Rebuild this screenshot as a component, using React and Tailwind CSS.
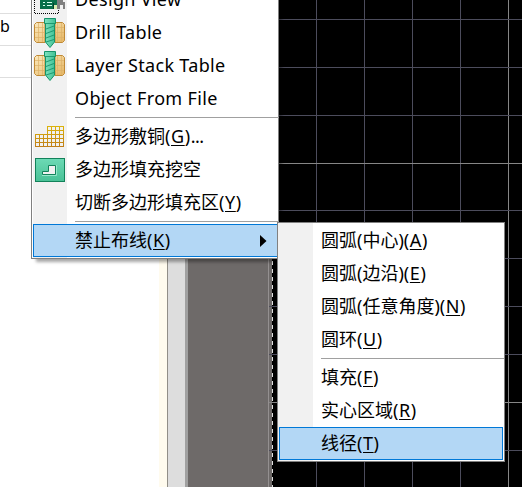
const FONT = "font-['Noto_Sans','Noto_Sans_CJK_SC',sans-serif]";

function DrillIcon() {
  return (
    <svg width="32" height="31" viewBox="0 0 32 31">
      <defs>
        <linearGradient id="board" x1="0" y1="0" x2="1" y2="1">
          <stop offset="0" stopColor="#fbe9bd" />
          <stop offset="1" stopColor="#e5b562" />
        </linearGradient>
        <linearGradient id="bit" x1="0" y1="0" x2="1" y2="0">
          <stop offset="0" stopColor="#80e3c0" />
          <stop offset="1" stopColor="#3fc094" />
        </linearGradient>
      </defs>
      <path d="M2.5 5.5H11V25.5H2.5L.5 23.5V7.5ZM21 5.5H28.5L30.5 7.5V23.5L28.5 25.5H21Z" fill="url(#board)" stroke="#c08a36" />
      <path d="M1 10.5H11M1 15.5H11M1 20.5H11M4.5 6V25M8.5 6V25M21 10.5H30M21 15.5H30M21 20.5H30M23.5 6V25M27.5 6V25" stroke="#dcb268" strokeWidth=".7" />
      <path d="M10.5 1.5H21.5V6.5H20.5V25L16 30.5L11.5 25V6.5H10.5Z" fill="url(#bit)" stroke="#16936a" />
      <path d="M11 6.5H21M12 12L20 9M12 16.5L20 13.5M12 21L20 18M12 25L20 22.5" stroke="#16936a" strokeWidth=".9" />
    </svg>
  );
}

function ViewIcon() {
  return (
    <svg width="32" height="31" viewBox="0 -16 32 31" shapeRendering="crispEdges">
      <path d="M.5 -16V13.5H24.5V-16" fill="none" stroke="#000" strokeDasharray="1 1" />
      <rect x="6" y="-8" width="17" height="17" fill="#08704a" />
      <path d="M9 2.5H11M13 2.5H18M9 5.5H11M13 5.5H18M9 -.5H18" stroke="#d8fff0" />
      <path d="M23 0h6v2h2v7h-2v-4h-3v4h-3z" fill="#808080" />
      <path d="M20 5h3v4h-3z" fill="#d9eeb0" />
      <path d="M19.5 3V9" stroke="#053f2a" />
    </svg>
  );
}

function PolygonIcon() {
  return (
    <svg width="32" height="31" viewBox="0 0 32 31">
      <defs>
        <linearGradient id="mesh" gradientUnits="userSpaceOnUse" x1="0" y1="5" x2="0" y2="26">
          <stop offset="0" stopColor="#dcb40a" />
          <stop offset="1" stopColor="#bf7d18" />
        </linearGradient>
      </defs>
      <path d="M1 13.5H30M1 17.5H30M1 21.5H30M1 25.5H30M13 5.5H30M13 9.5H30M1.5 13V26M5.5 13V26M9.5 13V26M13.5 5V26M17.5 5V26M21.5 5V26M25.5 5V26M29.5 5V26" stroke="url(#mesh)" fill="none" />
    </svg>
  );
}

function CutoutIcon() {
  return (
    <svg width="32" height="31" viewBox="0 0 32 31">
      <defs>
        <linearGradient id="pour" x1="0" y1="0" x2="0" y2="1">
          <stop offset="0" stopColor="#6ddab5" />
          <stop offset="1" stopColor="#49c196" />
        </linearGradient>
      </defs>
      <rect x="1.5" y="4.5" width="29" height="23" fill="url(#pour)" stroke="#12825a" />
      <path d="M14.5 11.5H21.5V20.5H8.5V17.5H14.5Z" fill="#f1f1f1" stroke="#12825a" />
      <path d="M22.5 11V21.5H8" stroke="#95e8ca" fill="none" />
    </svg>
  );
}

function Item({ icon, label, hotkey, tail, active, arrow, latin }) {
  return (
    <div className={`flex h-[33px] shrink-0 items-center border ${active ? "border-[#0078d7] bg-[#b3d7f5]" : "border-transparent"}`}>
      <div className="flex w-[41px] shrink-0 items-center">{icon}</div>
      <div className={`grow whitespace-nowrap text-[18px] leading-[31px] ${latin ? "tracking-[0.33px]" : ""}`}>
        {label}
        {hotkey && (
          <span className="tracking-[0.6px]">
            (<span className="underline decoration-1 underline-offset-2">{hotkey}</span>)
          </span>
        )}
        {tail && <span className="-tracking-[0.6px]">{tail}</span>}
      </div>
      {arrow && (
        <svg className="mr-[10px]" width="7" height="12" viewBox="0 0 7 12">
          <path d="M0 0L6.5 6L0 12Z" />
        </svg>
      )}
    </div>
  );
}

function Separator() {
  return <div className="my-[2px] ml-[42px] -mr-px h-px shrink-0 bg-[#a0a0a0]" />;
}

function Row({ text }) {
  return <div className="h-8 shrink-0 border-b border-[#dedede] text-[16px] leading-[25px]">{text}</div>;
}

const columns = [316, 364, 412, 460, 508];
const rows = [19, 67, 115, 163, 210, 258, 306, 354, 402, 450];

function Board() {
  return (
    <svg className="block" width="254" height="487" viewBox="268 0 254 487" shapeRendering="crispEdges">
      <rect x="268" width="254" height="487" />
      <rect x="268" width="4" height="487" fill="#6e6a69" />
      <rect x="268" width="1" height="487" fill="#949090" />
      {columns.map((x) => (
        <rect key={x} x={x} width="1" height="487" fill={x === 508 ? "#868686" : "#4c4c5c"} />
      ))}
      {rows.map((y) => (
        <rect key={y} x="269" y={y} width="253" height="1" fill={y === 163 || y === 402 ? "#868686" : "#4c4c5c"} />
      ))}
      <path d="M272.5 5V487" stroke="#e0e0e0" strokeDasharray="4 4" />
    </svg>
  );
}

export default function App() {
  return (
    <div className={`relative flex h-[487px] w-[522px] overflow-hidden bg-white text-black ${FONT}`}>
      <div className="flex w-[159px] shrink-0 flex-col">
        <div className="h-[14px] shrink-0 border-b border-[#dedede]" />
        <Row text="b" />
        <Row text="" />
      </div>
      <div className="w-2 shrink-0 bg-[#fffbee]" />
      <div className="w-px shrink-0 bg-[#918e87]" />
      <div className="w-[17px] shrink-0 bg-[#dddddd]" />
      <div className="w-[3px] shrink-0 bg-[#a0a0a0]" />
      <div className="w-20 shrink-0 bg-[#6e6a69]" />
      <Board />

      <div className="absolute left-[31px] top-[-20px] flex h-[279px] w-[248px] flex-col justify-end border border-[#808080] bg-[linear-gradient(to_right,#fff_1px,#f1f1f1_1px,#f1f1f1_35px,#fff_35px)] p-px pr-0 shadow-[4px_4px_3px_-1px_rgba(0,0,0,0.35)]">
        <Item icon={<ViewIcon />} label="Design View" latin />
        <Item icon={<DrillIcon />} label="Drill Table" latin />
        <Item icon={<DrillIcon />} label="Layer Stack Table" latin />
        <Item label="Object From File" latin />
        <Separator />
        <Item icon={<PolygonIcon />} label="多边形敷铜" hotkey="G" tail="..." />
        <Item icon={<CutoutIcon />} label="多边形填充挖空" />
        <Item label="切断多边形填充区" hotkey="Y" />
        <Separator />
        <Item label="禁止布线" hotkey="K" active arrow />
      </div>

      <div className="absolute left-[277px] top-[222px] flex h-[240px] w-[228px] flex-col border border-[#808080] bg-[linear-gradient(to_right,#f1f1f1_35px,#fff_35px)] p-px">
        <Item label="圆弧(中心)" hotkey="A" />
        <Item label="圆弧(边沿)" hotkey="E" />
        <Item label="圆弧(任意角度)" hotkey="N" />
        <Item label="圆环" hotkey="U" />
        <Separator />
        <Item label="填充" hotkey="F" />
        <Item label="实心区域" hotkey="R" />
        <Item label="线径" hotkey="T" active />
      </div>
    </div>
  );
}
